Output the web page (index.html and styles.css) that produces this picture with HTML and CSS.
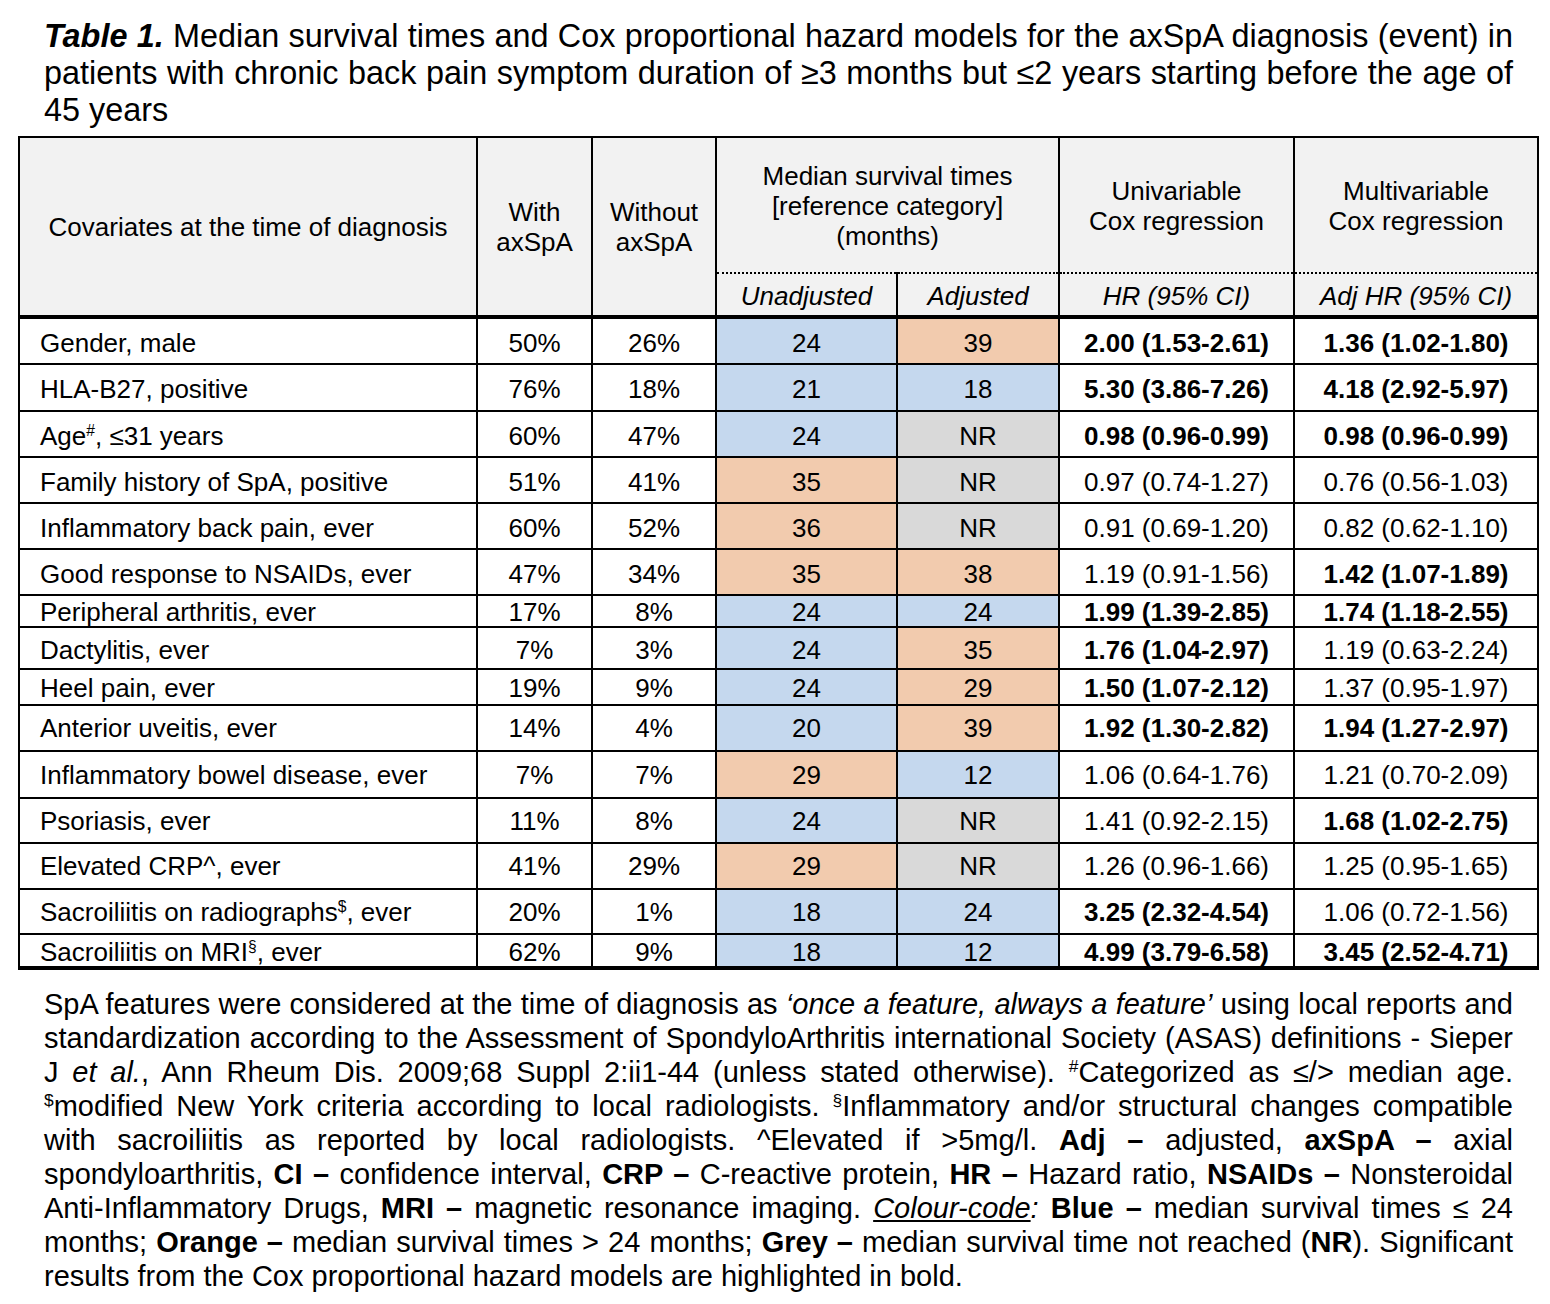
FILE: index.html
```html
<!DOCTYPE html>
<html lang="en">
<head>
<meta charset="utf-8">
<title>Table 1</title>
<link rel="stylesheet" href="styles.css">
</head>
<body>
<div class="page">
  <div class="caption">
    <div class="jl"><b><i>Table 1.</i></b> Median survival times and Cox proportional hazard models for the axSpA diagnosis (event) in</div>
    <div class="jl">patients with chronic back pain symptom duration of ≥3 months but ≤2 years starting before the age of</div>
    <div>45 years</div>
  </div>

  <table class="tbl">
    <colgroup>
      <col class="c1"><col class="c2"><col class="c3"><col class="c4"><col class="c5"><col class="c6"><col class="c7">
    </colgroup>
    <thead>
      <tr class="h1">
        <th rowspan="2" class="hcov">Covariates at the time of diagnosis</th>
        <th rowspan="2">With<br>axSpA</th>
        <th rowspan="2">Without<br>axSpA</th>
        <th colspan="2" class="dotb">Median survival times<br>[reference category]<br>(months)</th>
        <th class="dotb">Univariable<br>Cox regression</th>
        <th class="dotb">Multivariable<br>Cox regression</th>
      </tr>
      <tr class="h2">
        <th class="sub dotr">Unadjusted</th>
        <th class="sub">Adjusted</th>
        <th class="sub">HR (95% CI)</th>
        <th class="sub">Adj HR (95% CI)</th>
      </tr>
    </thead>
    <tbody>
      <tr class="r46 top"><td class="cov">Gender, male</td><td>50%</td><td>26%</td><td class="bl dotr">24</td><td class="or">39</td><td class="sig">2.00 (1.53-2.61)</td><td class="sig">1.36 (1.02-1.80)</td></tr>
      <tr class="r47 top"><td class="cov">HLA-B27, positive</td><td>76%</td><td>18%</td><td class="bl dotr">21</td><td class="bl">18</td><td class="sig">5.30 (3.86-7.26)</td><td class="sig">4.18 (2.92-5.97)</td></tr>
      <tr class="r46 top"><td class="cov">Age<sup>#</sup>, ≤31 years</td><td>60%</td><td>47%</td><td class="bl dotr">24</td><td class="gr">NR</td><td class="sig">0.98 (0.96-0.99)</td><td class="sig">0.98 (0.96-0.99)</td></tr>
      <tr class="r46 top"><td class="cov">Family history of SpA, positive</td><td>51%</td><td>41%</td><td class="or dotr">35</td><td class="gr">NR</td><td>0.97 (0.74-1.27)</td><td>0.76 (0.56-1.03)</td></tr>
      <tr class="r46 top"><td class="cov">Inflammatory back pain, ever</td><td>60%</td><td>52%</td><td class="or dotr">36</td><td class="gr">NR</td><td>0.91 (0.69-1.20)</td><td>0.82 (0.62-1.10)</td></tr>
      <tr class="r46 top"><td class="cov">Good response to NSAIDs, ever</td><td>47%</td><td>34%</td><td class="or dotr">35</td><td class="or">38</td><td>1.19 (0.91-1.56)</td><td class="sig">1.42 (1.07-1.89)</td></tr>
      <tr class="r30"><td class="cov">Peripheral arthritis, ever</td><td>17%</td><td>8%</td><td class="bl dotr">24</td><td class="bl">24</td><td class="sig">1.99 (1.39-2.85)</td><td class="sig">1.74 (1.18-2.55)</td></tr>
      <tr class="r41"><td class="cov">Dactylitis, ever</td><td>7%</td><td>3%</td><td class="bl dotr">24</td><td class="or">35</td><td class="sig">1.76 (1.04-2.97)</td><td>1.19 (0.63-2.24)</td></tr>
      <tr class="r36"><td class="cov">Heel pain, ever</td><td>19%</td><td>9%</td><td class="bl dotr">24</td><td class="or">29</td><td class="sig">1.50 (1.07-2.12)</td><td>1.37 (0.95-1.97)</td></tr>
      <tr class="r46"><td class="cov">Anterior uveitis, ever</td><td>14%</td><td>4%</td><td class="bl dotr">20</td><td class="or">39</td><td class="sig">1.92 (1.30-2.82)</td><td class="sig">1.94 (1.27-2.97)</td></tr>
      <tr class="r47"><td class="cov">Inflammatory bowel disease, ever</td><td>7%</td><td>7%</td><td class="or dotr">29</td><td class="bl">12</td><td>1.06 (0.64-1.76)</td><td>1.21 (0.70-2.09)</td></tr>
      <tr class="r45"><td class="cov">Psoriasis, ever</td><td>11%</td><td>8%</td><td class="bl dotr">24</td><td class="gr">NR</td><td>1.41 (0.92-2.15)</td><td class="sig">1.68 (1.02-2.75)</td></tr>
      <tr class="r46"><td class="cov">Elevated CRP^, ever</td><td>41%</td><td>29%</td><td class="or dotr">29</td><td class="gr">NR</td><td>1.26 (0.96-1.66)</td><td>1.25 (0.95-1.65)</td></tr>
      <tr class="r45"><td class="cov">Sacroiliitis on radiographs<sup>$</sup>, ever</td><td>20%</td><td>1%</td><td class="bl dotr">18</td><td class="bl">24</td><td class="sig">3.25 (2.32-4.54)</td><td>1.06 (0.72-1.56)</td></tr>
      <tr class="r31"><td class="cov">Sacroiliitis on MRI<sup>§</sup>, ever</td><td>62%</td><td>9%</td><td class="bl dotr">18</td><td class="bl">12</td><td class="sig">4.99 (3.79-6.58)</td><td class="sig">3.45 (2.52-4.71)</td></tr>
    </tbody>
  </table>

  <div class="notes">
    <div class="jl">SpA features were considered at the time of diagnosis as <i>‘once a feature, always a feature’</i> using local reports and</div>
    <div class="jl">standardization according to the Assessment of SpondyloArthritis international Society (ASAS) definitions - Sieper</div>
    <div class="jl">J <i>et al.</i>, Ann Rheum Dis. 2009;68 Suppl 2:ii1-44 (unless stated otherwise). <sup>#</sup>Categorized as ≤/&gt; median age.</div>
    <div class="jl"><sup>$</sup>modified New York criteria according to local radiologists. <sup>§</sup>Inflammatory and/or structural changes compatible</div>
    <div class="jl">with sacroiliitis as reported by local radiologists. ^Elevated if &gt;5mg/l. <b>Adj –</b> adjusted, <b>axSpA –</b> axial</div>
    <div class="jl">spondyloarthritis, <b>CI –</b> confidence interval, <b>CRP –</b> C-reactive protein, <b>HR –</b> Hazard ratio, <b>NSAIDs –</b> Nonsteroidal</div>
    <div class="jl">Anti-Inflammatory Drugs, <b>MRI –</b> magnetic resonance imaging. <i><u>Colour-code</u>:</i> <b>Blue –</b> median survival times ≤ 24</div>
    <div class="jl">months; <b>Orange –</b> median survival times &gt; 24 months; <b>Grey –</b> median survival time not reached (<b>NR</b>). Significant</div>
    <div>results from the Cox proportional hazard models are highlighted in bold.</div>
  </div>
</div>
</body>
</html>
```

FILE: styles.css
```css
html, body {
  margin: 0;
  padding: 0;
  background: #ffffff;
}

body {
  font-family: "Liberation Sans", Arial, sans-serif;
  color: #000000;
}

.page {
  width: 1550px;
}

.jl {
  text-align: justify;
  text-align-last: justify;
  white-space: nowrap;
}

.caption {
  padding: 18px 37px 0 44px;
  font-size: 32.4px;
  line-height: 37px;
}

.tbl {
  margin: 7px 0 0 18px;
  width: 1519px;
  border-collapse: collapse;
  table-layout: fixed;
  font-size: 26px;
  border: 2px solid #000;
  border-bottom: 4px solid #000;
}

.c1 { width: 458px; }
.c2 { width: 115px; }
.c3 { width: 124px; }
.c4 { width: 181px; }
.c5 { width: 162px; }
.c6 { width: 235px; }
.c7 { width: 244px; }

.tbl th {
  background: #f2f2f2;
  font-weight: normal;
  line-height: 30px;
  padding: 0;
  border: 2px solid #000;
  text-align: center;
  vertical-align: middle;
}

.tbl .h1 th { height: 132px; }
.tbl .h1 th.dotb { border-bottom: 2px dotted #000; padding-top: 2px; }
.tbl .h2 th { height: 39px; border-bottom: 4px solid #000; border-top: 2px dotted #000; }
.tbl th[rowspan] { border-bottom: 4px solid #000; }

.tbl th.sub {
  font-style: italic;
  padding-top: 2px;
}

.tbl td {
  padding: 0;
  border: 2px solid #000;
  text-align: center;
  vertical-align: middle;
  line-height: 26px;
  white-space: nowrap;
}

.tbl td.cov {
  text-align: left;
  padding-left: 20px;
}

.tbl th.dotr,
.tbl td.dotr {
  border-right: 2px dotted #000;
}

.tbl td.bl { background: #c5d8ee; }
.tbl td.or { background: #f2cbae; }
.tbl td.gr { background: #d9d9d9; }
.tbl td.sig { font-weight: bold; }

.r30 td { height: 28px; padding-top: 2px; }
.r31 td { height: 28px; padding-top: 3px; }
.r36 td { height: 32px; padding-top: 2px; }
.r41 td { height: 37px; padding-top: 3px; }
.r45 td { height: 43px; }
.r46 td { height: 44px; }
.r47 td { height: 45px; }

.tbl tr.top td { padding-top: 3px; }
.tbl tr.r46.top td { height: 41px; }
.tbl tr.r47.top td { height: 42px; }

sup {
  font-size: 0.6em;
  line-height: 0;
  vertical-align: 0.6em;
}

.notes {
  padding: 17px 37px 0 44px;
  font-size: 29px;
  line-height: 34px;
}
```
